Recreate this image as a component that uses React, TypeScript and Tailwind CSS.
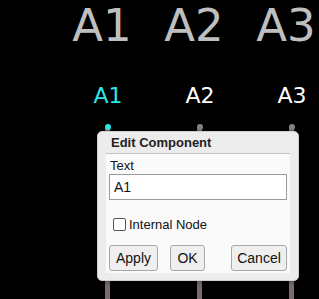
import React from "react";

const nodes = [
  { x: 108, label: "A1", active: true },
  { x: 200, label: "A2", active: false },
  { x: 292, label: "A3", active: false },
];

export default function App() {
  return (
    <div className="relative w-[319px] h-[299px] bg-black overflow-hidden">
      {nodes.map((n) => (
        <React.Fragment key={n.label}>
          <div
            className="absolute top-[0px] w-[120px] -ml-[60px] text-center text-[#bfbfbf] text-[45px] leading-[52px]"
            style={{ left: n.x - 6, fontFamily: '"DejaVu Sans", sans-serif' }}
          >
            {n.label}
          </div>
          <div
            className={`absolute top-[83px] w-[80px] -ml-[40px] text-center text-[22px] leading-[26px] ${
              n.active ? "text-[#2ee6e6]" : "text-white"
            }`}
            style={{ left: n.x, fontFamily: '"DejaVu Sans", sans-serif' }}
          >
            {n.label}
          </div>
          <div
            className="absolute top-[127px] h-[172px] w-[5px] -ml-[3px] bg-[#776c6c]"
            style={{ left: n.x }}
          />
          <div
            className={`absolute top-[124px] w-[6px] h-[6px] -ml-[3px] rounded-full ${
              n.active ? "bg-[#2ee6e6]" : "bg-[#8a8080]"
            }`}
            style={{ left: n.x }}
          />
        </React.Fragment>
      ))}

      <div
        className="absolute left-[97px] top-[131px] w-[202px] h-[150px] bg-[#ececec] rounded-[5px] border border-[#d0d0d0] shadow-[0_1px_4px_rgba(0,0,0,0.4)] flex flex-col px-[8px] pb-[7px]"
        style={{ fontFamily: '"Liberation Sans", Arial, sans-serif' }}
      >
        <div className="pt-[3px] pl-[5px] h-[21px] text-[13px] leading-[15px] font-bold text-[#222]">
          Edit Component
        </div>
        <div className="flex-1 bg-[#fafafa] border-t border-[#c4c4c4] px-[3px] pt-[4px] flex flex-col">
          <div className="text-[13px] leading-[15px] text-[#111] pl-[1px]">Text</div>
          <div className="mt-[1px] h-[26px] w-[178px] border border-[#9a9a9a] bg-white px-[4px] flex items-center text-[14px] text-[#111]">
            A1
          </div>
          <div className="mt-[18px] flex items-center gap-[3px] pl-[4px] h-[13px]">
            <div className="w-[13px] h-[13px] rounded-[2px] border border-[#555] bg-white" />
            <span className="text-[13px] leading-[15px] text-[#111]">Internal Node</span>
          </div>
          <div className="mt-[14px] flex items-center">
            <div className="w-[49px] h-[26px] rounded-[3px] border border-[#a8a8a8] bg-[#efefef] flex items-center justify-center text-[14px] text-[#111]">
              Apply
            </div>
            <div className="ml-[12px] w-[35px] h-[26px] rounded-[3px] border border-[#a8a8a8] bg-[#efefef] flex items-center justify-center text-[14px] text-[#111]">
              OK
            </div>
            <div className="ml-auto w-[56px] h-[26px] rounded-[3px] border border-[#a8a8a8] bg-[#efefef] flex items-center justify-center text-[14px] text-[#111]">
              Cancel
            </div>
          </div>
        </div>
      </div>
    </div>
  );
}
